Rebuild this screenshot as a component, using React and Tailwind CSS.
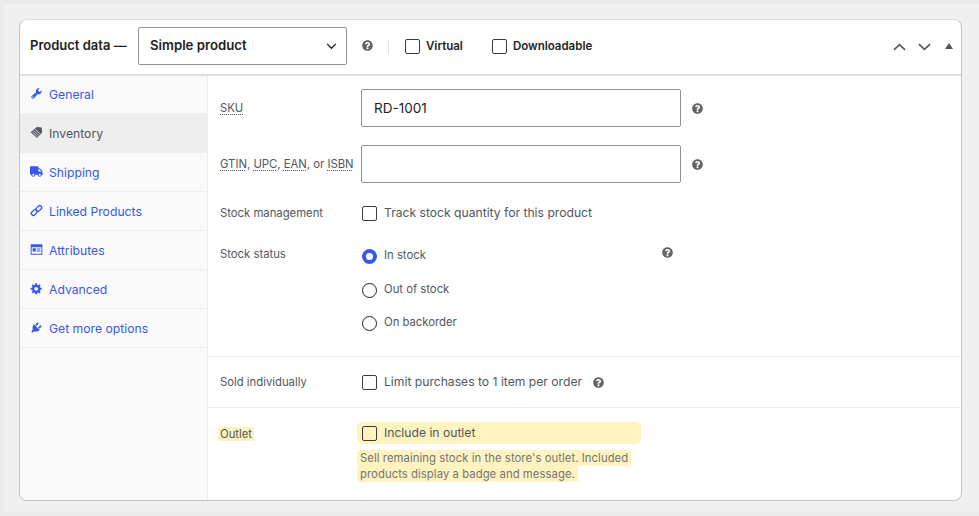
import { FaQuestionCircle, FaTruck } from "react-icons/fa";

const Wrench = ({ className }) => (
  <svg viewBox="0 0 20 20" className={className} fill="currentColor">
    <path d="M16.68 9.77c-1.34 1.34-3.3 1.67-4.95.99l-5.41 6.52c-.99.99-2.59.99-3.58 0s-.99-2.59 0-3.57l6.52-5.42c-.68-1.65-.35-3.61.99-4.95 1.28-1.28 3.12-1.62 4.72-1.06l-2.89 2.89 2.82 2.82 2.86-2.87c.53 1.58.18 3.39-1.08 4.65zM3.81 16.21c.4.39 1.04.39 1.43 0 .4-.4.4-1.04 0-1.43-.39-.4-1.03-.4-1.43 0-.39.39-.39 1.03 0 1.43z" />
  </svg>
);

const Tag = ({ className }) => (
  <svg viewBox="0 0 20 20" className={className} fill="currentColor">
    <path d="M10.5 1.5l7.5.8.6 7.6-7.9 8.4L1 9.8z" />
    <path d="M6 7l7.5 7.5M8.2 4.8l7.5 7.5M3.8 9.2l7.5 7.5" stroke="#eee" strokeWidth="1.3" />
  </svg>
);

const LinkIcon = ({ className }) => (
  <svg viewBox="0 0 20 20" className={className} fill="none" stroke="currentColor" strokeWidth="2">
    <rect x="1.5" y="10" width="10" height="6" rx="3" transform="rotate(-45 6.5 13)" />
    <rect x="8.5" y="4" width="10" height="6" rx="3" transform="rotate(-45 13.5 7)" />
  </svg>
);

const Card = ({ className }) => (
  <svg viewBox="0 0 20 20" className={className} fill="currentColor">
    <path
      fillRule="evenodd"
      d="M1 2h18v16H1zM2.5 6.5v10h15v-10zM4 8h5v5H4zM10.5 8.5H16V10h-5.5zM10.5 11.5H16V13h-5.5z"
    />
  </svg>
);

const Gear = ({ className }) => (
  <svg viewBox="0 0 20 20" className={className} fill="currentColor">
    <path d="M18 12h-2.18c-.17.7-.44 1.35-.81 1.93l1.54 1.54-2.1 2.1-1.54-1.54c-.58.36-1.23.63-1.91.79V19H8v-2.18c-.68-.16-1.33-.43-1.91-.79l-1.54 1.54-2.12-2.12 1.54-1.54c-.36-.58-.63-1.23-.79-1.91H1V9.03h2.17c.16-.7.44-1.35.8-1.94L2.43 5.55l2.1-2.1 1.54 1.54c.58-.37 1.24-.64 1.93-.81V2h3v2.18c.68.16 1.33.43 1.91.79l1.54-1.54 2.12 2.12-1.54 1.54c.36.59.64 1.24.8 1.94H18V12zm-8.5 1.5c1.66 0 3-1.34 3-3s-1.34-3-3-3-3 1.34-3 3 1.34 3 3 3z" />
  </svg>
);

const Plug = ({ className }) => (
  <svg viewBox="0 0 20 20" className={className} fill="currentColor">
    <path d="M13.11 4.36L9.87 7.6 8 5.73l3.24-3.24c.35-.34 1.05-.2 1.56.32.52.51.66 1.21.31 1.55zm-8 1.77l.91-1.12 9.01 9.01-1.19.84c-.71.71-2.63 1.16-3.82 1.16H6.14L4.9 17.26c-.59.59-1.54.59-2.12 0-.59-.58-.59-1.53 0-2.12l1.24-1.24v-3.88c0-1.13.4-3.19 1.09-3.89zm7.26 3.97l3.24-3.24c.34-.35 1.04-.21 1.55.31.52.51.66 1.21.31 1.55l-3.24 3.25z" />
  </svg>
);

const tabs = [
  { label: "General", icon: Wrench },
  { label: "Inventory", icon: Tag, active: true },
  { label: "Shipping", icon: FaTruck },
  { label: "Linked Products", icon: LinkIcon },
  { label: "Attributes", icon: Card },
  { label: "Advanced", icon: Gear },
  { label: "Get more options", icon: Plug },
];

const Help = ({ className = "" }) => (
  <FaQuestionCircle className={`w-[11px] h-[11px] shrink-0 text-[#646464] ${className}`} />
);

const Check = () => (
  <span className="block w-[15px] h-[15px] shrink-0 rounded-[2px] border border-[#3c3c3c] bg-transparent" />
);

const Radio = ({ checked }) =>
  checked ? (
    <span className="block w-[15px] h-[15px] shrink-0 rounded-full border-[4px] border-[#3858e9] bg-white" />
  ) : (
    <span className="block w-[15px] h-[15px] shrink-0 rounded-full border border-[#1e1e1e] bg-white" />
  );

const Abbr = ({ children }) => (
  <span className="underline decoration-dotted decoration-[#50575e] underline-offset-[2px]">
    {children}
  </span>
);

const Label = ({ children, className = "" }) => (
  <div className={`w-[141px] shrink-0 text-[11.3px] text-[#50575e] ${className}`}>{children}</div>
);

export default function App() {
  return (
    <div
      className="w-[979px] h-[516px] overflow-hidden bg-[#ebebeb] pt-[4px] pb-[4px] pl-[4px]"
      style={{ fontFamily: "Inter, sans-serif" }}
    >
      <div className="h-full bg-[#f0f0f0] pt-[15px] pl-[15px] pr-[17px] rounded-tl-[4px]">
        <div className="w-[943px] h-[482px] bg-white rounded-[8px] border border-[#c3c4c7] border-t-[#dcdcde] flex flex-col overflow-hidden">
          {/* header */}
          <div className="h-[56px] shrink-0 border-b-2 border-[#e0e0e0] flex items-center pl-[10px] pr-[8px] text-[#1e1e1e]">
            <span className="text-[13px] font-semibold w-[108px] mb-[2px]">Product data —</span>
            <div className="w-[209px] h-[38px] border border-[#8c8f94] rounded-[2px] flex items-center justify-between pl-[11px] pr-[9px] mb-[2px]">
              <span className="text-[13.2px] font-semibold">Simple product</span>
              <svg viewBox="0 0 12 8" className="w-[11px] h-[7px]" fill="none" stroke="#1e1e1e" strokeWidth="1.5">
                <path d="M1 1l5 5 5-5" />
              </svg>
            </div>
            <Help className="ml-[15px] mb-[4px]" />
            <span className="w-px h-[14px] bg-[#e5e5e5] ml-[15px] mb-[1px]" />
            <div className="ml-[16px] flex items-center gap-[6px] mb-[1px]">
              <Check />
              <span className="text-[11.5px] font-semibold">Virtual</span>
            </div>
            <div className="ml-[29px] flex items-center gap-[6px] mb-[1px]">
              <Check />
              <span className="text-[11.5px] font-semibold">Downloadable</span>
            </div>
            <div className="ml-auto flex items-center text-[#50575e] mb-[1px]">
              <svg viewBox="0 0 14 8" className="w-[13px] h-[8px]" fill="none" stroke="currentColor" strokeWidth="1.8">
                <path d="M1 7l6-5.5L13 7" />
              </svg>
              <svg viewBox="0 0 14 8" className="w-[13px] h-[8px] ml-[12px]" fill="none" stroke="currentColor" strokeWidth="1.8">
                <path d="M1 1l6 5.5L13 1" />
              </svg>
              <svg viewBox="0 0 8 6" className="w-[8px] h-[6px] ml-[14px] mb-[1px]" fill="currentColor">
                <path d="M4 0l4 6H0z" />
              </svg>
            </div>
          </div>

          <div className="flex-1 flex min-h-0">
            {/* tabs */}
            <div className="w-[188px] shrink-0 bg-[#fafafa] border-r border-[#eee]">
              {tabs.map(({ label, icon: Icon, active }) => (
                <div
                  key={label}
                  className={`h-[39px] first:h-[38px] flex items-center pl-[10px] pt-[2px] first:pt-[1px] border-b text-[12.2px] ${
                    active
                      ? "bg-[#eee] border-[#eee] text-[#50575e]"
                      : "border-[#eee] text-[#3858e9]"
                  }`}
                >
                  <span className="w-[19px] flex mb-[4px]">
                    <Icon className="w-[13px] h-[13px]" />
                  </span>
                  {label}
                </div>
              ))}
            </div>

            {/* fields */}
            <div className="flex-1 flex flex-col min-w-0">
              <div className="pl-[12px] pt-[13px] h-[281px] border-b border-[#eee]">
                <div className="flex items-center h-[38px]">
                  <Label>
                    <Abbr>SKU</Abbr>
                  </Label>
                  <div className="w-[320px] h-[38px] border border-[#8c8f94] rounded-[2px] flex items-center pl-[12px] text-[13.5px] text-[#1e1e1e]">
                    RD-1001
                  </div>
                  <Help className="ml-[11px]" />
                </div>
                <div className="flex items-center h-[38px] mt-[18px]">
                  <Label>
                    <Abbr>GTIN</Abbr>, <Abbr>UPC</Abbr>, <Abbr>EAN</Abbr>, or <Abbr>ISBN</Abbr>
                  </Label>
                  <div className="w-[320px] h-[38px] border border-[#8c8f94] rounded-[2px]" />
                  <Help className="ml-[11px]" />
                </div>
                <div className="flex items-center mt-[23px] h-[15px]">
                  <Label>Stock management</Label>
                  <span className="ml-[1px]"><Check /></span>
                  <span className="ml-[7px] text-[12.15px] text-[#50575e]">Track stock quantity for this product</span>
                </div>
                <div className="flex mt-[25px]">
                  <Label>Stock status</Label>
                  <div className="w-[301px] flex flex-col gap-[18.5px] pt-[3px] pl-[1px]">
                    <div className="flex items-center h-[15px]">
                      <Radio checked />
                      <span className="ml-[7px] mb-[2px] text-[11.3px] text-[#50575e]">In stock</span>
                    </div>
                    <div className="flex items-center h-[15px]">
                      <Radio />
                      <span className="ml-[7px] mb-[2px] text-[11.3px] text-[#50575e]">Out of stock</span>
                    </div>
                    <div className="flex items-center h-[15px]">
                      <Radio />
                      <span className="ml-[7px] mb-[2px] text-[11.3px] text-[#50575e]">On backorder</span>
                    </div>
                  </div>
                  <Help className="mt-[1px]" />
                </div>
              </div>

              <div className="pl-[12px] pt-[1px] h-[51px] border-b border-[#eee] flex items-center">
                <Label>Sold individually</Label>
                <span className="ml-[1px]"><Check /></span>
                <span className="ml-[7px] text-[12.15px] text-[#50575e]">Limit purchases to 1 item per order</span>
                <Help className="ml-[11px]" />
              </div>

              <div className="pl-[12px] pt-[14px] flex">
                <div className="w-[141px] shrink-0 text-[11.3px] text-[#50575e] leading-[24px]">
                  <span className="bg-[#fff3bf] rounded-[3px] px-[2px] -ml-[2px] py-[0px]">Outlet</span>
                </div>
                <div className="-ml-[4px] w-[284px]">
                  <div className="h-[22px] bg-[#fff3bf] rounded-[5px] flex items-center pl-[5px]">
                    <Check />
                    <span className="ml-[7px] pt-[1px] text-[12.15px] text-[#50575e]">Include in outlet</span>
                  </div>
                  <p className="mt-[6px] text-[11.3px] leading-[16px] tracking-[0.06px] text-[#757575]">
                    <span className="bg-[#fff3bf] rounded-[3px] px-[3px] py-[1px] [box-decoration-break:clone]">
                      Sell remaining stock in the store's outlet. Included products display a badge and message.
                    </span>
                  </p>
                </div>
              </div>
            </div>
          </div>
        </div>
      </div>
    </div>
  );
}
